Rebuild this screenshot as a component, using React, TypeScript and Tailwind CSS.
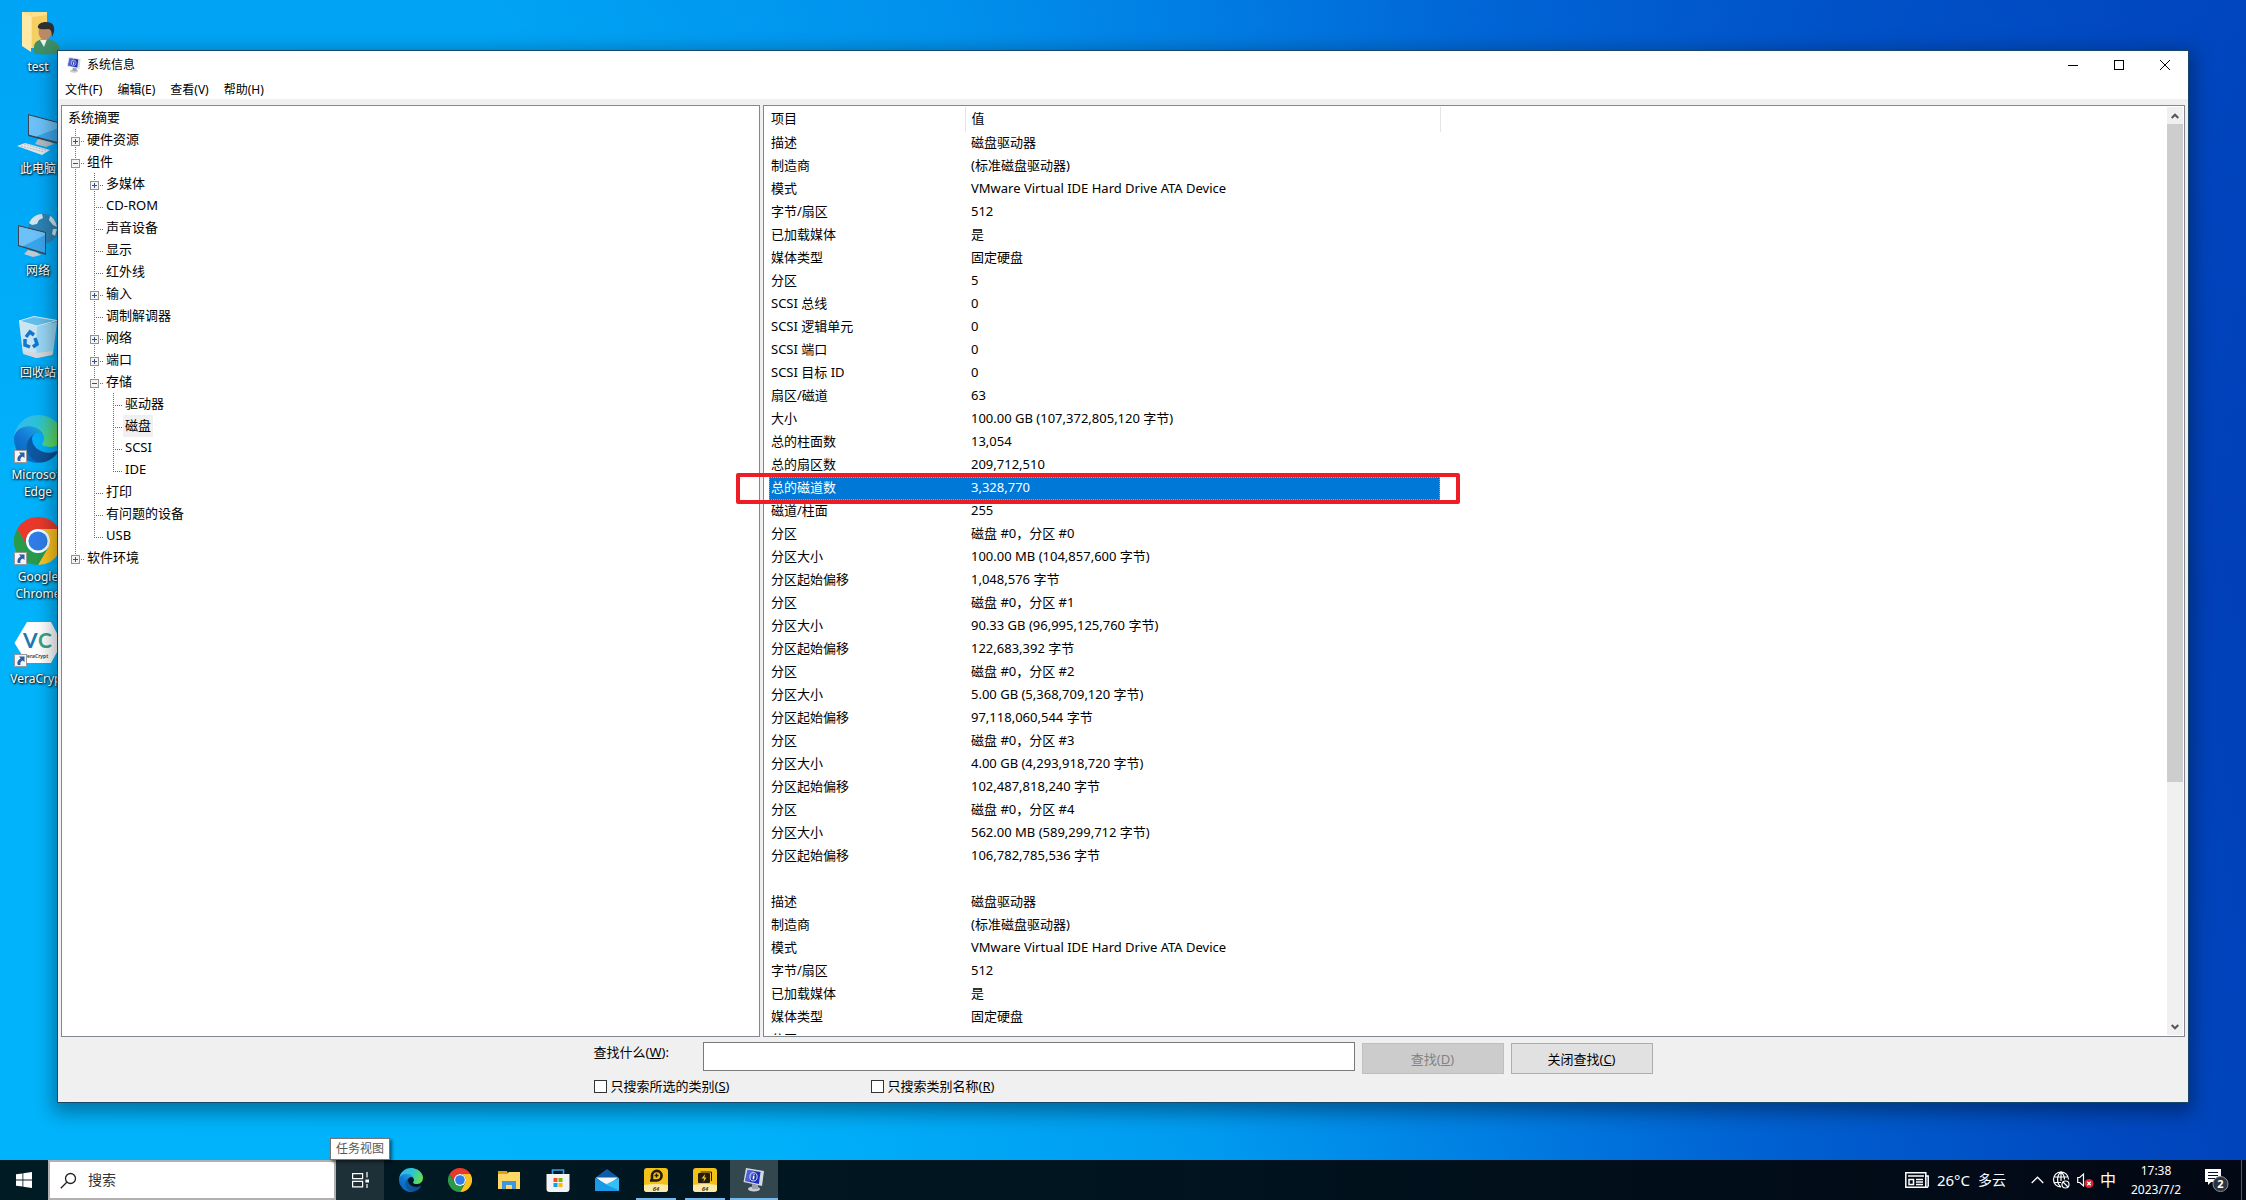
import type { ReactNode } from 'react';
import clsx from 'clsx';

type Guide = 'blank' | 'line' | 'tee' | 'end';

type TreeRow = {
  label: string;
  guides: Guide[];
  expanded?: boolean;
  selected?: boolean;
};

const TREE: TreeRow[] = [
  { label: '系统摘要', guides: [] },
  { label: '硬件资源', guides: ['tee'], expanded: false },
  { label: '组件', guides: ['tee'], expanded: true },
  { label: '多媒体', guides: ['line', 'tee'], expanded: false },
  { label: 'CD-ROM', guides: ['line', 'tee'] },
  { label: '声音设备', guides: ['line', 'tee'] },
  { label: '显示', guides: ['line', 'tee'] },
  { label: '红外线', guides: ['line', 'tee'] },
  { label: '输入', guides: ['line', 'tee'], expanded: false },
  { label: '调制解调器', guides: ['line', 'tee'] },
  { label: '网络', guides: ['line', 'tee'], expanded: false },
  { label: '端口', guides: ['line', 'tee'], expanded: false },
  { label: '存储', guides: ['line', 'tee'], expanded: true },
  { label: '驱动器', guides: ['line', 'line', 'tee'] },
  { label: '磁盘', guides: ['line', 'line', 'tee'], selected: true },
  { label: 'SCSI', guides: ['line', 'line', 'tee'] },
  { label: 'IDE', guides: ['line', 'line', 'end'] },
  { label: '打印', guides: ['line', 'tee'] },
  { label: '有问题的设备', guides: ['line', 'tee'] },
  { label: 'USB', guides: ['line', 'end'] },
  { label: '软件环境', guides: ['end'], expanded: false },
];

const ITEMS: [string, string][] = [
  ['描述', '磁盘驱动器'],
  ['制造商', '(标准磁盘驱动器)'],
  ['模式', 'VMware Virtual IDE Hard Drive ATA Device'],
  ['字节/扇区', '512'],
  ['已加载媒体', '是'],
  ['媒体类型', '固定硬盘'],
  ['分区', '5'],
  ['SCSI 总线', '0'],
  ['SCSI 逻辑单元', '0'],
  ['SCSI 端口', '0'],
  ['SCSI 目标 ID', '0'],
  ['扇区/磁道', '63'],
  ['大小', '100.00 GB (107,372,805,120 字节)'],
  ['总的柱面数', '13,054'],
  ['总的扇区数', '209,712,510'],
  ['总的磁道数', '3,328,770'],
  ['磁道/柱面', '255'],
  ['分区', '磁盘 #0，分区 #0'],
  ['分区大小', '100.00 MB (104,857,600 字节)'],
  ['分区起始偏移', '1,048,576 字节'],
  ['分区', '磁盘 #0，分区 #1'],
  ['分区大小', '90.33 GB (96,995,125,760 字节)'],
  ['分区起始偏移', '122,683,392 字节'],
  ['分区', '磁盘 #0，分区 #2'],
  ['分区大小', '5.00 GB (5,368,709,120 字节)'],
  ['分区起始偏移', '97,118,060,544 字节'],
  ['分区', '磁盘 #0，分区 #3'],
  ['分区大小', '4.00 GB (4,293,918,720 字节)'],
  ['分区起始偏移', '102,487,818,240 字节'],
  ['分区', '磁盘 #0，分区 #4'],
  ['分区大小', '562.00 MB (589,299,712 字节)'],
  ['分区起始偏移', '106,782,785,536 字节'],
  ['', ''],
  ['描述', '磁盘驱动器'],
  ['制造商', '(标准磁盘驱动器)'],
  ['模式', 'VMware Virtual IDE Hard Drive ATA Device'],
  ['字节/扇区', '512'],
  ['已加载媒体', '是'],
  ['媒体类型', '固定硬盘'],
  ['分区', '5'],
];

const SELECTED = 15;

/* ---------- icons ---------- */

function EdgeIcon({ className, id }: { className: string; id: string }) {
  return (
    <svg viewBox="0 0 256 256" className={className} aria-hidden="true">
      <defs>
        <linearGradient id={`${id}a`} x1="0.2" y1="0.5" x2="1" y2="0.6">
          <stop offset="0" stopColor="#0c59a4" />
          <stop offset="1" stopColor="#114a8b" />
        </linearGradient>
        <linearGradient id={`${id}b`} x1="0.8" y1="0.2" x2="0.3" y2="0.9">
          <stop offset="0" stopColor="#1b9de2" />
          <stop offset="0.5" stopColor="#1277d3" />
          <stop offset="1" stopColor="#0669bd" />
        </linearGradient>
        <linearGradient id={`${id}c`} x1="0" y1="0.3" x2="1" y2="0.6">
          <stop offset="0" stopColor="#35b8f1" />
          <stop offset="0.45" stopColor="#2cc3d5" />
          <stop offset="1" stopColor="#66e14e" />
        </linearGradient>
      </defs>
      <path
        fill={`url(#${id}a)`}
        d="M231 190.5a93.7 93.7 0 0 1-10.5 4.7 101.9 101.9 0 0 1-35.9 6.4c-47.3 0-88.5-32.5-88.5-74.3a31.5 31.5 0 0 1 16.4-27.3c-42.8 1.8-53.8 46.4-53.8 72.5 0 73.9 68.1 81.4 82.8 81.4 7.9 0 19.8-2.3 27-4.6l1.3-.4a128.3 128.3 0 0 0 66.6-52.8 4 4 0 0 0-5.4-5.6Z"
      />
      <path
        fill={`url(#${id}b)`}
        d="M105.7 241.4a79.2 79.2 0 0 1-22.7-21.3 80.7 80.7 0 0 1 29.5-120c3.1-1.5 8.5-4.1 15.5-4a32.4 32.4 0 0 1 25.7 13 31.9 31.9 0 0 1 6.4 18.7c0-.2 24.5-79.6-80-79.6-43.9 0-80 41.6-80 78.2a130 130 0 0 0 12.1 56 128 128 0 0 0 156.4 67.1 75.6 75.6 0 0 1-62.8-8Z"
      />
      <path
        fill={`url(#${id}c)`}
        d="M152.3 148.9c-.8 1-3.3 2.5-3.3 5.6 0 2.6 1.7 5.1 4.7 7.2 14.4 10 41.5 8.7 41.6 8.7a59.6 59.6 0 0 0 30.3-8.3 61.4 61.4 0 0 0 30.4-52.9c.3-22.4-8-37.3-11.3-43.9C223.5 23.8 177.7 0 128 0A128 128 0 0 0 0 126.2c.5-36.5 36.8-66 80-66 3.5 0 23.5.3 42 10 16.3 8.6 24.9 18.9 30.9 29.2 6.1 10.7 7.2 24.2 7.2 29.5s-2.7 13.4-7.8 20Z"
      />
    </svg>
  );
}

function ChromeIcon({ className }: { className: string }) {
  return (
    <svg viewBox="0 0 48 48" className={className} aria-hidden="true">
      <path fill="#e8392b" d="M24 12h20.8a24 24 0 0 0-41.6 0l10.4 18A12 12 0 0 1 24 12Z" />
      <path fill="#fcc31e" d="M34.4 30 24 48a24 24 0 0 0 20.8-36H24a12 12 0 0 1 10.4 18Z" />
      <path fill="#2a9a48" d="M13.6 30 3.2 12A24 24 0 0 0 24 48l10.4-18a12 12 0 0 1-20.8 0Z" />
      <circle cx="24" cy="24" r="12" fill="#fff" />
      <circle cx="24" cy="24" r="9.6" fill="#2f7de9" />
    </svg>
  );
}

function SystemInfoIcon({ className }: { className: string }) {
  return (
    <svg viewBox="0 0 24 24" className={className} aria-hidden="true">
      <ellipse cx="12" cy="21" rx="6" ry="2.6" fill="#c9cdd2" />
      <path fill="#9aa2ab" d="m10 16 6 1v4h-6Z" />
      <path fill="#d4d9e0" d="m4 0 18 3-2 15L1.500 14Z" />
      <path fill="#1c2fb5" d="m5.500 1.800 13 2.100-1.600 12L3 12.900Z" />
      <path fill="#6f86ea" d="m5.500 1.800 7 1.100-5 11-4.500-1Z" opacity=".6" />
      <ellipse cx="11.500" cy="8.800" rx="3.600" ry="4.200" fill="none" stroke="#cfd8ff" strokeWidth="1" />
      <path stroke="#fff" strokeWidth="1.600" d="m11.800 7.700-.5 3.700m.8-5.600-.1.900" />
    </svg>
  );
}

function UserFolderIcon() {
  return (
    <svg viewBox="0 0 48 48" className="size-12" aria-hidden="true">
      <path fill="#f6cf62" d="M8 5h25v36H12Z" />
      <path fill="#ffe08a" d="M8 5h25v3L18 10v31h-6Z" />
      <path fill="#ffe9a6" d="m8 5 9 5v35l-9-6Z" />
      <path fill="#3f9068" d="M20 46V39c1-5 6-7 10-7 6 0 13 2 15 7l2 7c-8 2-20 2-27 0Z" />
      <path fill="#e9f3f5" d="m26 33 4 7 3-8Z" />
      <ellipse cx="31" cy="25" rx="6.500" ry="8" fill="#b98a63" />
      <path fill="#2f2f31" d="M24 21c-1-4 4-6 8-6 7 0 9 4 8 10l-2 5c0-5-1-8-4-8-4 0-7 1-10-1Z" />
    </svg>
  );
}

function ComputerIcon() {
  return (
    <svg viewBox="0 0 48 48" className="size-12" aria-hidden="true">
      <path fill="#3d4650" d="m14 5 34 9v22l-34-9Z" />
      <path fill="#3aa5ec" d="m15 6.500 32 8.500v19L15 25.500Z" />
      <path fill="#6cc1f8" d="m15 6.500 32 8.500v3L22 27.400l-7-1.900Z" />
      <path fill="#b3bac1" d="m24 30 12 3 4 2-8 3-11-3Z" />
      <path fill="#e3e7ea" d="m3 37 8-3 25 7-8 5Z" />
      <path stroke="#aeb6bd" strokeWidth="1" strokeDasharray="2 1" d="m7 37 23 6m-20-8 23 6.500" />
    </svg>
  );
}

function NetworkIcon() {
  return (
    <svg viewBox="0 0 48 48" className="size-12" aria-hidden="true">
      <circle cx="29" cy="18" r="15" fill="#2d83b5" />
      <path fill="#cfe6ef" d="M15 12c3-6 8-9 13-9l1 4-4 2-2 4-5 1Zm21-7c4 2 6 6 7 11l-4-2-4-5Zm3 13 4 0-2 7-3-2Z" />
      <path fill="#3d4650" d="m4 14 28 7v23L4 35Z" />
      <path fill="#3aa5ec" d="m5 15.500 26 6.500v20L5 34Z" />
      <path fill="#6cc1f8" d="m5 15.500 26 6.500v2L9 35.200l-4-1.200Z" />
      <path fill="#c2c9cf" d="m14 39 8 2 5 3-8 2-9-3Z" />
    </svg>
  );
}

function RecycleIcon() {
  return (
    <svg viewBox="0 0 48 48" className="size-12" aria-hidden="true">
      <path fill="#a9dcf4" fillOpacity=".9" d="m5 8 18 4 20-3-4 32-16 4-14-4Z" />
      <path fill="#dfeaf0" d="m5 8 18 4-1 33-13-5Z" opacity=".7" />
      <path fill="#63bfe9" stroke="#d7eef9" d="m5 8 15-4.500 23 4L23 13Z" />
      <path fill="#d8d8d8" d="m9 38 14 2 16-2-.6 4L23 45l-13-4Z" />
      <g fill="none" stroke="#1277d0" strokeWidth="3.500">
        <path d="m12 24 4-5 4 3" />
        <path d="m21 25 2 6-4 3" />
        <path d="m16 34-5-2 0-6" />
      </g>
    </svg>
  );
}

function VeraCryptIcon() {
  return (
    <svg viewBox="0 0 48 48" className="size-12" aria-hidden="true">
      <path fill="#fff" d="M13 3h24l11 21-11 20H13L.5 24Z" />
      <text x="9" y="29" fontSize="21" fontWeight="700" fontFamily="Lato" fill="#1b78b5">
        V
      </text>
      <text x="24" y="29" fontSize="21" fontWeight="700" fontFamily="Lato" fill="#3aa386">
        C
      </text>
      <text x="10" y="39" fontSize="5" fontWeight="600" fontFamily="Noto Sans" fill="#333">
        VeraCrypt
      </text>
    </svg>
  );
}

function ShortcutBadge() {
  return (
    <svg viewBox="0 0 13 13" className="absolute bottom-0 left-0 size-[13px]" aria-hidden="true">
      <path fill="#f4f4f4" stroke="#9a9a9a" d="M.5.5h12v12H.5Z" />
      <path fill="#2a5ea8" d="M5 2.500h5.500V8L8.700 6.500C6.500 7.500 6 9 6.500 11H4C2.500 8.500 4 5.500 6.700 4.400Z" />
    </svg>
  );
}

function ExplorerIcon() {
  return (
    <svg viewBox="0 0 24 24" className="size-6" aria-hidden="true">
      <path fill="#e2a10c" d="M1 3h9l1 3H1Z" />
      <path fill="#ffd767" d="M1 6h9l2-2h11v17H1Z" />
      <path fill="#3e96dc" d="M5 13h14v8h-4v-4H9v4H5Z" />
    </svg>
  );
}

function StoreIcon() {
  return (
    <svg viewBox="0 0 24 24" className="size-6" aria-hidden="true">
      <path fill="none" stroke="#28a8ea" strokeWidth="1.600" d="M6.500 7V2h11v5" />
      <path fill="#f3f3f3" d="M.5 6h23v15a3 3 0 0 1-3 3h-17a3 3 0 0 1-3-3Z" />
      <path fill="#f04f23" d="M7.500 10h4v4h-4Z" />
      <path fill="#7db700" d="M12.500 10h4v4h-4Z" />
      <path fill="#06a3ee" d="M7.500 15h4v4h-4Z" />
      <path fill="#fdb900" d="M12.500 15h4v4h-4Z" />
    </svg>
  );
}

function MailIcon() {
  return (
    <svg viewBox="0 0 24 24" className="size-6" aria-hidden="true">
      <path fill="#0f5ba8" d="M0 10 12 1l12 9v3H0Z" />
      <path fill="#f5f7f9" d="M1 9.500h22L12 18Z" />
      <path fill="#1b9ae8" d="M0 10v13h24Z" />
      <path fill="#34c0f4" d="M24 10v13L10.500 16.500Z" />
      <path fill="#1b9ae8" d="m0 23 10.500-6.500L24 23Z" />
    </svg>
  );
}

function Yellow64Icon({ children }: { children: ReactNode }) {
  return (
    <svg viewBox="0 0 24 24" className="size-6" aria-hidden="true">
      <rect width="24" height="24" rx="3" fill="#f4c118" />
      <path fill="#fdeaa9" d="M0 17q12-2 24 0v4a3 3 0 0 1-3 3H3a3 3 0 0 1-3-3Z" />
      {children}
      <text x="12" y="23" textAnchor="middle" fontSize="6" fontStyle="italic" fontWeight="700" fontFamily="Noto Sans" fill="#4b4127">
        64
      </text>
    </svg>
  );
}

/* ---------- window ---------- */

function GuideCell({ kind, expanded }: { kind: Guide; expanded?: boolean }) {
  const box = expanded !== undefined;
  return (
    <svg viewBox="0 0 19 22" className="block h-[22px] w-[19px]" shapeRendering="crispEdges" aria-hidden="true">
      <g stroke="#6b6b6b" strokeDasharray="1 1">
        {kind !== 'blank' && <path d={kind === 'end' ? 'M9.500 0v12' : 'M9.500 0v22'} />}
        {(kind === 'tee' || kind === 'end') && <path d="M9 12.500h9" />}
      </g>
      {box && (
        <>
          <path fill="#f4f4f4" stroke="#919191" d="M5.500 8.500h8v8h-8Z" />
          <path stroke="#34518f" d={expanded ? 'M7 12.500h5' : 'M7 12.500h5M9.500 10v5'} />
        </>
      )}
    </svg>
  );
}

function TreePane() {
  return (
    <nav aria-label="类别" className="basis-[699px] shrink overflow-hidden border border-[#828790] bg-white pl-1 pt-px">
      <ul>
        {TREE.map((row) => (
          <li key={row.guides.length + row.label} className="flex h-[22px] items-center text-[13px]">
            {row.guides.map((kind, i) =>
              i === row.guides.length - 1 && row.expanded !== undefined ? (
                <button key={i} type="button" aria-label={row.label} aria-expanded={row.expanded}>
                  <GuideCell kind={kind} expanded={row.expanded} />
                </button>
              ) : (
                <GuideCell key={i} kind={kind} />
              ),
            )}
            <span className={clsx('px-0.5 pb-0.5 leading-5', row.selected && 'bg-[#f0f0f0]')}>{row.label}</span>
          </li>
        ))}
      </ul>
    </nav>
  );
}

function Arrow({ down }: { down?: boolean }) {
  return (
    <button type="button" aria-label={down ? '向下滚动' : '向上滚动'} className="grid h-[17px] place-items-center bg-[#f0f0f0]">
      <svg viewBox="0 0 8 6" className={clsx('h-1.5 w-2', down && 'rotate-180')} aria-hidden="true">
        <path fill="none" stroke="#555" strokeWidth="2" d="m.7 5 3.300-3.300L7.300 5" />
      </svg>
    </button>
  );
}

function DetailPane() {
  return (
    <section className="flex min-w-0 flex-1 border border-[#828790] bg-white p-px">
      <div className="min-w-0 flex-1 overflow-hidden pl-1">
        <table className="table-fixed border-collapse text-left text-[13px] leading-[21px]">
          <colgroup>
            <col className="w-[196px]" />
            <col className="w-[475px]" />
          </colgroup>
          <thead>
            <tr className="h-[25px]">
              <th className="border-r border-[#e5e5e5] p-0 pb-0.5 pl-0.5 font-normal">项目</th>
              <th className="border-r border-[#e5e5e5] p-0 pb-0.5 pl-1.5 font-normal">值</th>
            </tr>
          </thead>
          <tbody>
            {ITEMS.map(([name, value], i) => (
              <tr
                key={i}
                className={clsx(
                  'h-[23px]',
                  i === SELECTED && 'bg-[#0078d7] text-white outline-1 -outline-offset-1 outline-dotted outline-[#ff8728]',
                )}
              >
                <td className="p-0 pb-0.5 pl-0.5 whitespace-nowrap">{name}</td>
                <td className="p-0 pb-0.5 pl-1.5 whitespace-nowrap">{value}</td>
              </tr>
            ))}
          </tbody>
        </table>
      </div>
      <div className="flex w-4 flex-col bg-[#f0f0f0]">
        <Arrow />
        <div className="min-h-0 flex-1">
          <div className="h-[73.6%] bg-[#cdcdcd]" />
        </div>
        <Arrow down />
      </div>
    </section>
  );
}

function FindBar() {
  return (
    <form className="grid h-[65px] shrink-0 grid-cols-[109px_652px_149px_149px] content-start justify-center pt-[5px] text-[13px] leading-5">
      <label htmlFor="find">
        查找什么(<u>W</u>):
      </label>
      <input id="find" type="text" className="h-[29px] border border-[#7a7a7a] bg-white px-1" />
      <button type="button" disabled className="ml-[7px] mt-px h-[31px] border border-[#bfbfbf] bg-[#cccccc] text-[#838383]">
        查找(<u>D</u>)
      </button>
      <button type="button" className="ml-[7px] mt-px h-[31px] border border-[#adadad] bg-[#e1e1e1]">
        关闭查找(<u>C</u>)
      </button>
      <div className="col-span-4 mt-0.5 flex">
        <label className="flex w-[277px] items-center gap-1">
          <input type="checkbox" className="size-[13px] appearance-none border border-[#333] bg-white" />
          <span>
            只搜索所选的类别(<u>S</u>)
          </span>
        </label>
        <label className="flex items-center gap-1">
          <input type="checkbox" className="size-[13px] appearance-none border border-[#333] bg-white" />
          <span>
            只搜索类别名称(<u>R</u>)
          </span>
        </label>
      </div>
    </form>
  );
}

function TitleBar() {
  return (
    <header className="flex h-7 shrink-0 bg-white pl-2">
      <div className="flex flex-1 items-center gap-[5px] text-xs">
        <SystemInfoIcon className="size-4" />
        <h1>系统信息</h1>
      </div>
      <button type="button" aria-label="最小化" className="grid w-[46px] place-items-center">
        <span className="h-px w-2.5 bg-black" />
      </button>
      <button type="button" aria-label="最大化" className="grid w-[46px] place-items-center">
        <span className="size-2.5 border border-black" />
      </button>
      <button type="button" aria-label="关闭" className="grid w-[46px] place-items-center">
        <svg viewBox="0 0 10 10" className="size-2.5" aria-hidden="true">
          <path stroke="#000" d="m0 0 10 10M10 0 0 10" />
        </svg>
      </button>
    </header>
  );
}

function SystemWindow() {
  return (
    <div className="relative flex min-h-0 flex-1 flex-col border border-[#17486b] bg-[#f0f0f0] text-black shadow-[0_6px_18px_4px_rgba(0,0,0,0.35)]">
      <TitleBar />
      <div role="menubar" className="flex h-5 shrink-0 items-center gap-px bg-white pt-0.5 text-xs">
        {['文件(F)', '编辑(E)', '查看(V)', '帮助(H)'].map((m) => (
          <button key={m} type="button" role="menuitem" className="px-[7px]">
            {m}
          </button>
        ))}
      </div>
      <div className="flex min-h-0 flex-1 gap-[3px] px-[3px] pt-1.5">
        <TreePane />
        <DetailPane />
      </div>
      <FindBar />
    </div>
  );
}

/* ---------- desktop ---------- */

const SHORTCUTS: { label: string; icon: ReactNode; link?: boolean }[] = [
  { label: 'test', icon: <UserFolderIcon /> },
  { label: '此电脑', icon: <ComputerIcon /> },
  { label: '网络', icon: <NetworkIcon /> },
  { label: '回收站', icon: <RecycleIcon /> },
  { label: 'Microsoft Edge', icon: <EdgeIcon className="size-12" id="d" />, link: true },
  { label: 'Google Chrome', icon: <ChromeIcon className="size-12" />, link: true },
  { label: 'VeraCrypt', icon: <VeraCryptIcon />, link: true },
];

function DesktopIcons() {
  return (
    <ul className="absolute top-[7px] left-0 w-[76px]">
      {SHORTCUTS.map((s) => (
        <li key={s.label} className="flex h-[102px] flex-col items-center gap-[3px] text-center text-xs leading-[17px] text-white">
          <div className="relative">
            {s.icon}
            {s.link && <ShortcutBadge />}
          </div>
          <span className="[text-shadow:1px_1px_2px_#000,0_0_3px_rgba(0,0,0,0.8)]">{s.label}</span>
        </li>
      ))}
    </ul>
  );
}

const PINNED: { name: string; icon: ReactNode; state?: 'open' | 'active' }[] = [
  { name: 'Microsoft Edge', icon: <EdgeIcon className="size-6" id="t" /> },
  { name: 'Google Chrome', icon: <ChromeIcon className="size-6" /> },
  { name: '文件资源管理器', icon: <ExplorerIcon /> },
  { name: 'Microsoft Store', icon: <StoreIcon /> },
  { name: '邮件', icon: <MailIcon /> },
  {
    name: 'Tool P',
    state: 'open',
    icon: (
      <Yellow64Icon>
        <path fill="none" stroke="#221d10" strokeWidth="2.600" d="M8 13.500V7.500a4.800 4.800 0 1 1 4.800 5H6" />
        <path stroke="#221d10" strokeWidth="1.400" d="M12.500 5.500v4m-2-2h4" />
      </Yellow64Icon>
    ),
  },
  {
    name: 'Tool L',
    state: 'open',
    icon: (
      <Yellow64Icon>
        <path fill="none" stroke="#221d10" d="M7.500 4h11v9" />
        <rect x="5" y="5" width="12" height="10" rx="1" fill="#221d10" />
        <path fill="#f4c118" d="m12 6-3.500 4.500H11L10.500 14 13.500 9.500H11.500Z" />
      </Yellow64Icon>
    ),
  },
  { name: '系统信息', icon: <SystemInfoIcon className="size-6" />, state: 'active' },
];

function Tray() {
  return (
    <div className="flex items-center text-white">
      <button type="button" className="flex items-center gap-2 text-[15px]">
        <svg viewBox="0 0 24 16" className="h-4 w-6" fill="none" stroke="#fff" strokeWidth="1.500" aria-hidden="true">
          <path d="M.8.8h20v14.400h-20ZM21 4h2.200v9.500a1.700 1.700 0 0 1-2.400 1.700M3 4h16M11 7.500h7M11 10h7M11 12.500h7M4 7.500h4.500v5H4Z" />
        </svg>
        <span>26°C</span>
        <span className="text-sm">多云</span>
      </button>
      <button type="button" aria-label="显示隐藏的图标" className="ml-[25px]">
        <svg viewBox="0 0 13 8" className="h-2 w-[13px]" fill="none" stroke="#fff" strokeWidth="1.300" aria-hidden="true">
          <path d="m.7 7 5.800-5.800L12.300 7" />
        </svg>
      </button>
      <button type="button" aria-label="网络" className="ml-2">
        <svg viewBox="0 0 18 18" className="size-[18px]" fill="none" stroke="#fff" strokeWidth="1.200" aria-hidden="true">
          <path d="M9 16a7.500 7.500 0 1 1 7.500-7.500M9 1C4.500 4 4.500 13 9 16M9 1c2.500 2 3.500 4.500 3.500 7.500M2 6h14M2 11.500h7M9 1v9" />
          <circle cx="13.500" cy="13.500" r="3.500" />
          <path d="m11 11 5 5" />
        </svg>
      </button>
      <button type="button" aria-label="音量" className="ml-[7px]">
        <svg viewBox="0 0 17 16" className="h-4 w-[17px]" fill="none" aria-hidden="true">
          <path stroke="#fff" strokeWidth="1.200" d="M.7 5.500h2L6.500 2v12L2.700 10.500h-2Z" />
          <circle cx="12" cy="11.500" r="4.500" fill="#e0242f" />
          <path stroke="#fff" strokeWidth="1.300" d="m10.300 9.800 3.400 3.400m0-3.400-3.400 3.400" />
        </svg>
      </button>
      <button type="button" aria-label="输入法" className="ml-1.5 text-base">
        中
      </button>
      <button type="button" className="ml-2 flex h-10 w-[64px] flex-col items-center justify-center text-xs leading-[19px] whitespace-nowrap">
        <span>17:38</span>
        <span>2023/7/2</span>
      </button>
      <button type="button" aria-label="通知" className="relative ml-[17px] size-6">
        <svg viewBox="0 0 24 24" className="size-6" aria-hidden="true">
          <path fill="#fff" d="M0 1h16v13H6l-3 3v-3H0Z" />
          <path stroke="#0a1020" strokeWidth="1.200" d="M3 4.500h10M3 7.500h10M3 10.500h7" />
          <circle cx="15.500" cy="16" r="7.500" fill="#2c333d" stroke="#8b9097" />
          <text x="15.500" y="20" textAnchor="middle" fontSize="11" fontWeight="700" fontFamily="Noto Sans" fill="#fff">
            2
          </text>
        </svg>
      </button>
      <div className="ml-3 h-10 w-[5px] border-l border-[#4d5563]" />
    </div>
  );
}

function Taskbar() {
  return (
    <footer className="relative flex h-10 shrink-0 bg-linear-to-r from-[#001b24] via-[#00141f] to-[#020814]">
      <button type="button" aria-label="开始" className="grid w-12 place-items-center">
        <svg viewBox="0 0 16 16" className="size-4" fill="#fff" aria-hidden="true">
          <path d="M0 2.300 6.500 1.400v6.200H0ZM7.300 1.300 16 0v7.600H7.300ZM0 8.400h6.500v6.200L0 13.700ZM7.300 8.400H16V16l-8.700-1.300Z" />
        </svg>
      </button>
      <label className="flex w-72 items-center gap-[11px] border-2 border-[#b5b0b0] bg-white pl-2.5">
        <svg viewBox="0 0 17 17" className="size-[17px]" fill="none" stroke="#222" strokeWidth="1.300" aria-hidden="true">
          <circle cx="10.500" cy="6.500" r="5" />
          <path d="M6.800 10.200.8 16.300" />
        </svg>
        <input type="search" placeholder="搜索" aria-label="搜索" className="min-w-0 flex-1 text-sm outline-none placeholder:text-[#333]" />
      </label>
      <button type="button" aria-label="任务视图" className="mr-[3px] grid w-12 place-items-center bg-[#1d3038]">
        <svg viewBox="0 0 17 16" className="h-4 w-[17px]" fill="none" stroke="#fff" strokeWidth="1.200" aria-hidden="true">
          <path d="M.6 1.600h10v5H.6ZM.6 9.400h10v5.500H.6ZM15 0v5.500M15 12v4" />
          <path fill="#fff" d="M14 8h2.500v2H14Z" />
        </svg>
      </button>
      <div className="flex gap-px">
        {PINNED.map((app) => (
          <button
            key={app.name}
            type="button"
            aria-label={app.name}
            className={clsx('flex w-12 flex-col items-center pt-2', app.state === 'active' && 'bg-[#33474f]')}
          >
            {app.icon}
            {app.state && <span className={clsx('mt-1.5 h-0.5 bg-[#76b9ed]', app.state === 'active' ? 'w-12' : 'w-10')} />}
          </button>
        ))}
      </div>
      <div className="flex-1" />
      <Tray />
      <div
        role="tooltip"
        className="absolute bottom-10 left-[330px] border border-[#767676] bg-white px-[5px] text-xs leading-5 text-[#575757] shadow-[2px_2px_3px_rgba(0,0,0,0.5)]"
      >
        任务视图
      </div>
    </footer>
  );
}

export default function App() {
  return (
    <div className="flex h-screen flex-col overflow-hidden bg-[linear-gradient(180deg,rgba(0,110,225,0.22)_0%,rgba(0,110,225,0)_50%),linear-gradient(77deg,#00b4fc_0%,#00b2fa_30%,#009bf0_48%,#007de1_60%,#0062d2_70%,#0049c0_84%,#003ab4_100%)] font-['Noto_Sans','Noto_Sans_CJK_SC',sans-serif]">
      <main className="relative flex min-h-0 flex-1 flex-col px-[57px] pt-[50px] pb-[57px]">
        <DesktopIcons />
        <SystemWindow />
        {/* highlight frame around the total tracks row */}
        <div className="pointer-events-none absolute top-[473px] left-[736px] h-[31px] w-[724px] rounded-xs border-4 border-[#ee1c25]" />
      </main>
      <Taskbar />
    </div>
  );
}
